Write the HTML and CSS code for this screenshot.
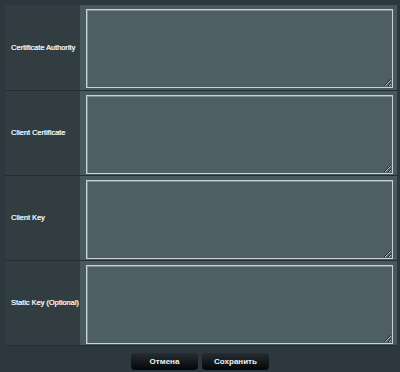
FILE: index.html
```html
<!DOCTYPE html>
<html>
<head>
    <meta charset="utf-8">
    <title>OpenVPN keys</title>
    <link rel="stylesheet" href="styles.css">
</head>
<body>
    <div id="container">
        <table class="keys">
            <tr>
                <th>Certificate Authority</th>
                <td><textarea></textarea></td>
            </tr>
            <tr>
                <th>Client Certificate</th>
                <td><textarea></textarea></td>
            </tr>
            <tr>
                <th>Client Key</th>
                <td><textarea></textarea></td>
            </tr>
            <tr>
                <th>Static Key (Optional)</th>
                <td><textarea></textarea></td>
            </tr>
        </table>
        <div class="buttons">
            <button class="button">Отмена</button>
            <button class="button">Сохранить</button>
        </div>
    </div>
</body>
</html>
```

FILE: styles.css
```css
html, body {
    margin: 0px;
    background-color: rgb(44, 56, 61);
    font-family: "Liberation Sans", Arial, sans-serif;
}
#container {
    padding: 5px 3px 0px 5px;
}
.keys {
    width: 392px;
    border-collapse: collapse;
    table-layout: fixed;
}
.keys tr {
    height: 85px;
}
.keys th {
    width: 75px;
    padding: 0px 0px 0px 6px;
    box-sizing: border-box;
    background-color: rgb(50, 61, 66);
    border-bottom: 1px solid rgb(36, 46, 50);
    color: rgb(235, 238, 238);
    font-size: 7.4px;
    font-weight: normal;
    text-shadow: 0.3px 0px 0px rgb(235, 238, 238);
    text-align: left;
    white-space: nowrap;
}
.keys td {
    background-color: rgb(71, 89, 95);
    border-bottom: 1px solid rgb(36, 46, 50);
    padding: 4px 4px 1px 6px;
    vertical-align: top;
}
.keys textarea {
    display: block;
    width: 307px;
    height: 79px;
    box-sizing: border-box;
    margin: 0px;
    background-color: rgb(77, 95, 101);
    border: 1px solid rgb(205, 210, 208);
    box-shadow: inset 1px 1px 0px rgb(130, 140, 138);
    color: white;
    font-family: "Liberation Mono", monospace;
    font-size: 9px;
    outline: none;
}
.buttons {
    display: flex;
    justify-content: center;
    gap: 4px;
    padding-top: 7px;
    padding-right: 2px;
}
.button {
    width: 67px;
    height: 17px;
    padding: 0px;
    border: none;
    border-radius: 4px;
    background: linear-gradient(rgb(38, 46, 50), rgb(4, 6, 7));
    color: rgb(240, 240, 240);
    font-family: "Liberation Sans", Arial, sans-serif;
    font-size: 8px;
    font-weight: bold;
}
```
